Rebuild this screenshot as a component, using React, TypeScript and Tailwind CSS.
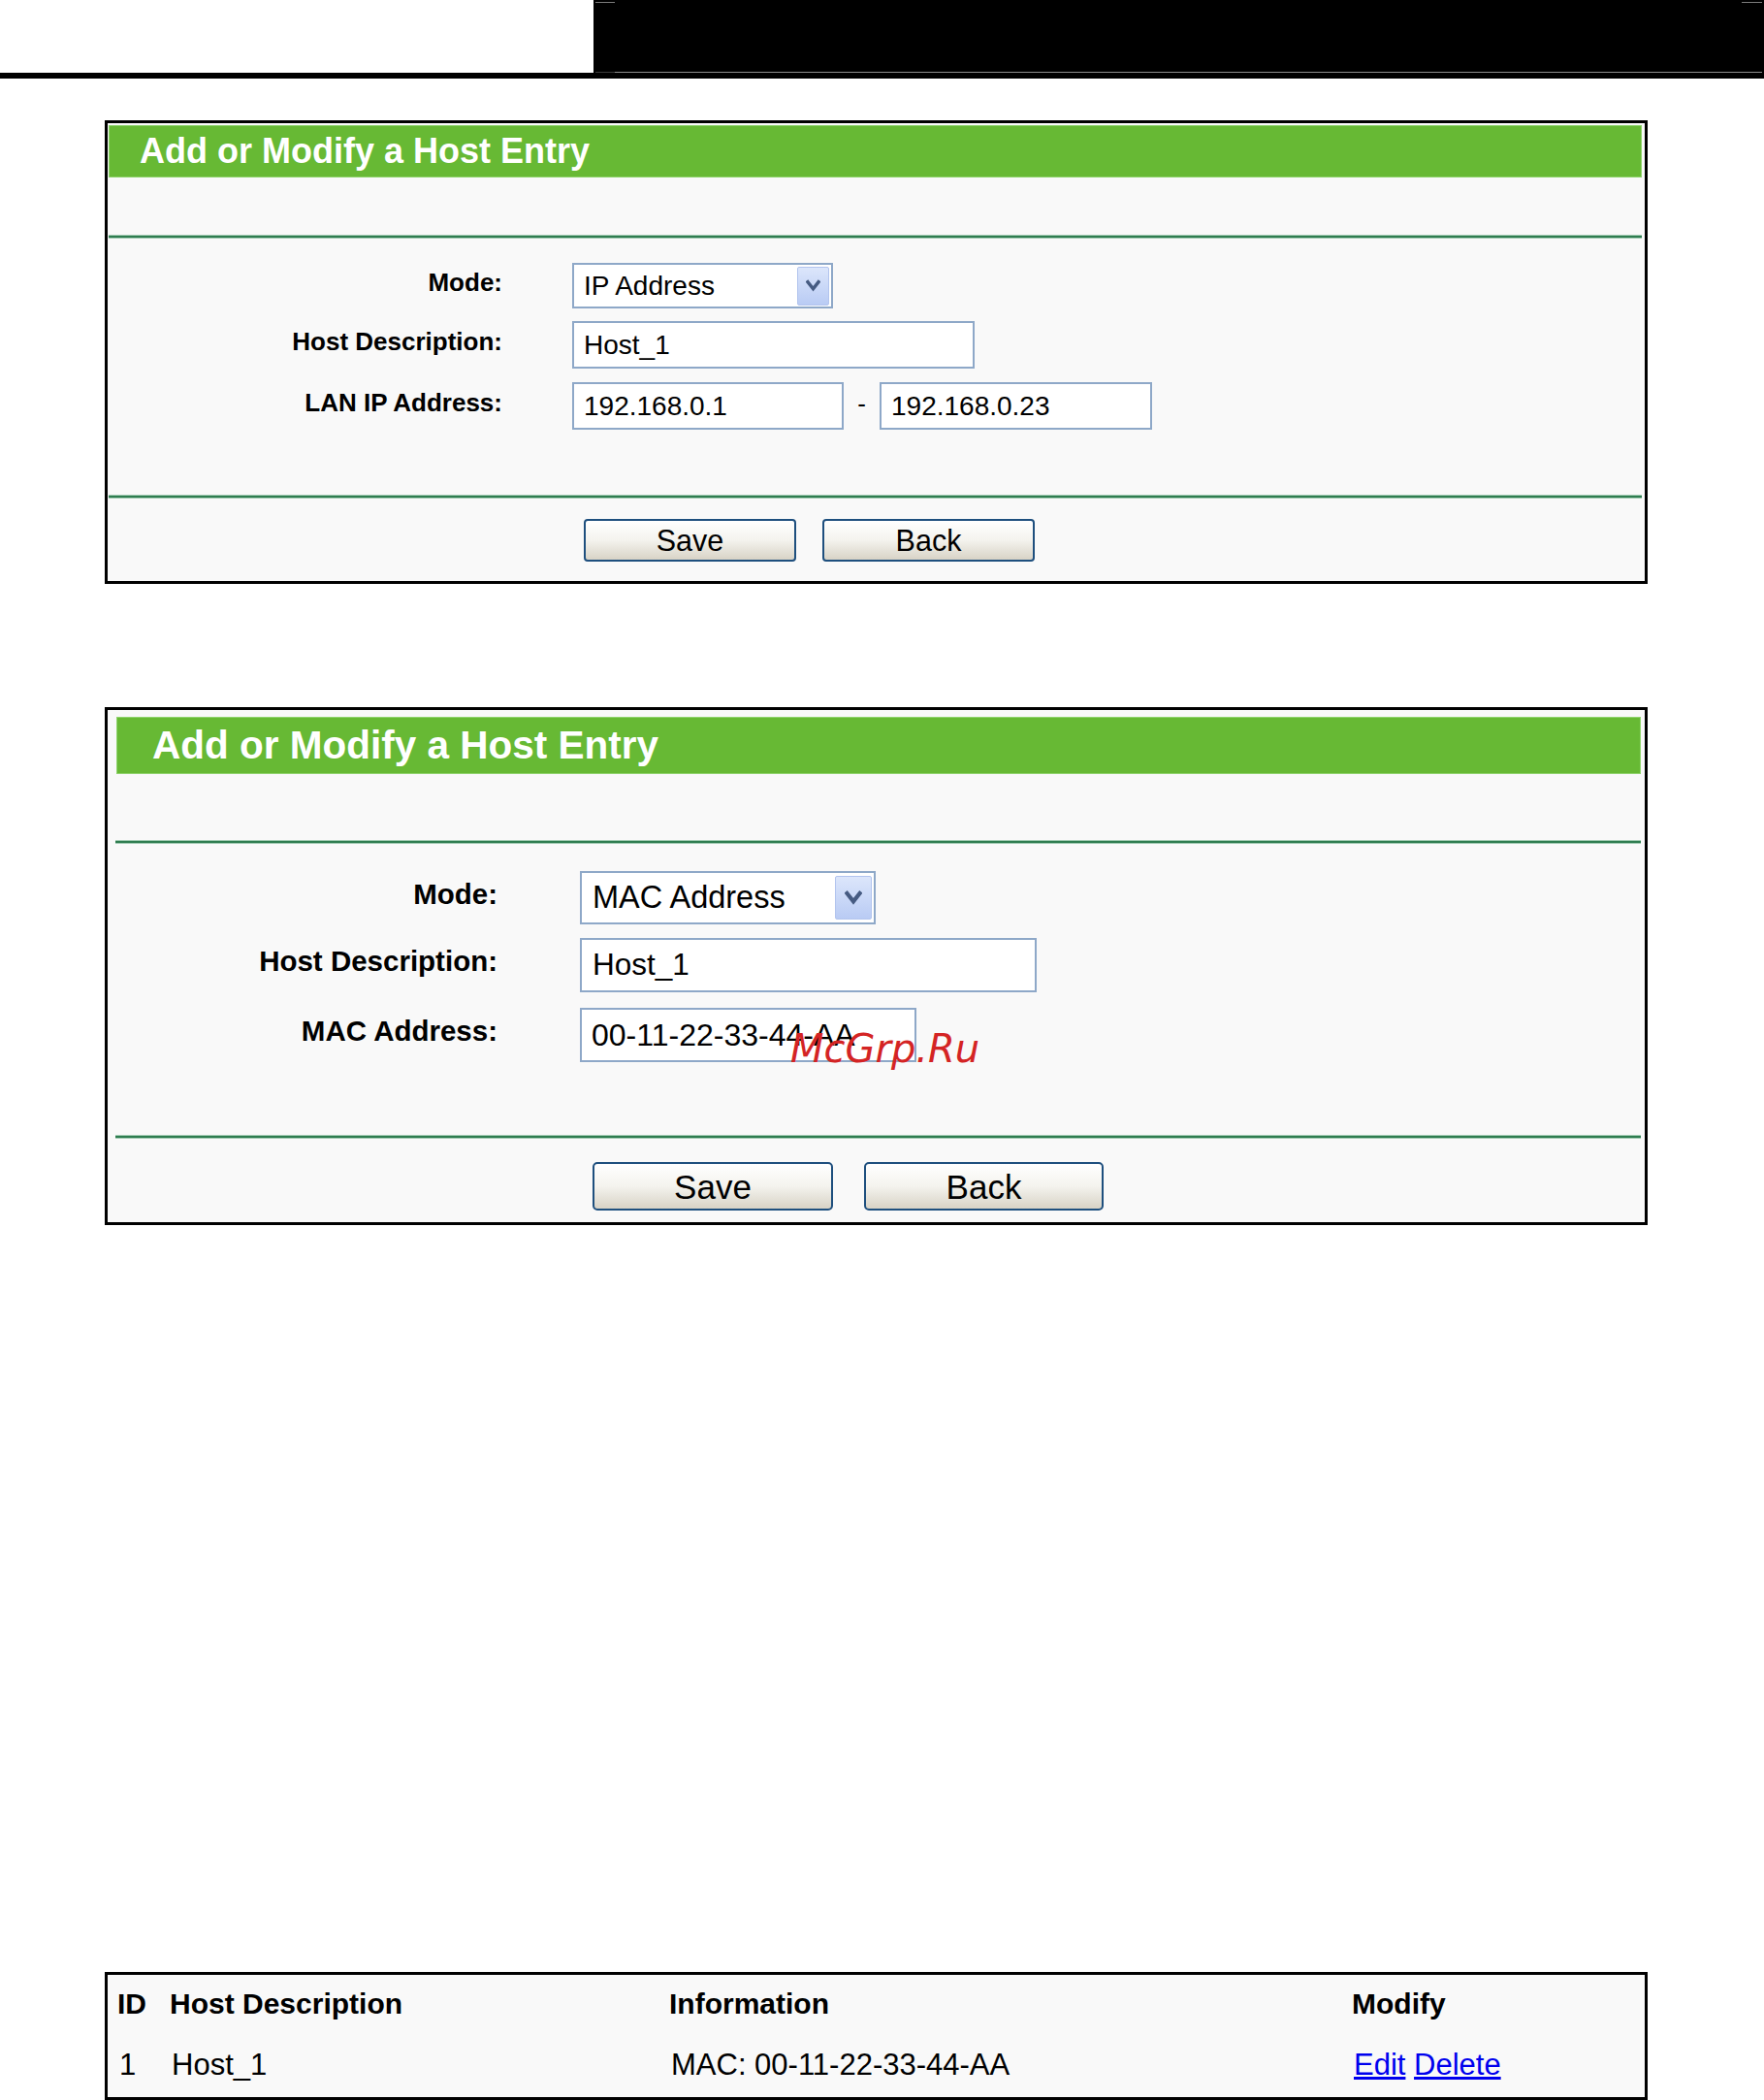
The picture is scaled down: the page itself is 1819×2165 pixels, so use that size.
import React from "react";

function Chevron({ w, h }: { w: number; h: number }) {
  return (
    <svg width={w} height={h} viewBox="0 0 12 10">
      <path d="M1.6 2 L6 7.6 L10.4 2" fill="none" stroke="#465b82" strokeWidth="2.8" strokeLinecap="square" />
    </svg>
  );
}

function Sep({ cls }: { cls: string }) {
  return <div className={"h-[4px] bg-[#2f7d50] border-y border-[#a3cbb3] " + cls} />;
}

export default function App() {
  return (
    <div className="w-[1819px] h-[2165px] bg-white overflow-hidden relative font-['Liberation_Sans',Arial,sans-serif] text-black">
      {/* top bar */}
      <div className="flex h-[75px]">
        <div className="w-[612px] bg-white" />
        <div className="flex-1 bg-black flex flex-col justify-between">
          <div className="flex justify-between px-[2px] pt-[2px]">
            <div className="w-[20px] h-[1px] bg-[#7a7a7a]" />
            <div className="w-[21px] h-[1px] bg-[#7a7a7a]" />
          </div>
          <div className="flex mx-[2px] h-[1px]">
            <div className="w-[20px] bg-[#3c3c3c]" />
            <div className="flex-1 bg-[#8c8c8c]" />
          </div>
        </div>
      </div>
      <div className="h-[6px] bg-black" />

      {/* Box 1 */}
      <div className="ml-[108px] mt-[43px] w-[1591px] h-[478px] border-[3px] border-black bg-[#f9f9f9] flex flex-col">
        <div className="ml-[1px] mr-[3px] mt-[2px] h-[54px] bg-[#67b934] border border-[#8fd36c] flex items-center pl-[31px]">
          <span className="text-white font-bold text-[36px] leading-none whitespace-nowrap">Add or Modify a Host Entry</span>
        </div>
        <Sep cls="ml-[1px] mr-[3px] mt-[59px]" />

        <div className="mt-[25px] flex items-center h-[47px]">
          <div className="w-[407px] text-right font-bold text-[26px] pb-[6px]">Mode:</div>
          <div className="ml-[72px] w-[269px] h-[47px] border-2 border-[#8ea8c8] bg-white flex items-center justify-between pl-[10px] pr-[2px]">
            <span className="text-[28px] leading-none">IP Address</span>
            <div className="w-[33px] h-[40px] rounded-[2px] border border-[#b2c4ee] bg-linear-to-b from-[#dce6fb] to-[#b9cbf4] flex items-center justify-center">
              <Chevron w={15} h={13} />
            </div>
          </div>
        </div>
        <div className="mt-[13px] flex items-center h-[49px]">
          <div className="w-[407px] text-right font-bold text-[26px] pb-[6px]">Host Description:</div>
          <div className="ml-[72px] w-[415px] h-[49px] border-2 border-[#8ea8c8] bg-white flex items-center pl-[10px]">
            <span className="text-[28px] leading-none">Host_1</span>
          </div>
        </div>
        <div className="mt-[14px] flex items-center h-[49px]">
          <div className="w-[407px] text-right font-bold text-[26px] pb-[6px]">LAN IP Address:</div>
          <div className="ml-[72px] w-[280px] h-[49px] border-2 border-[#8ea8c8] bg-white flex items-center pl-[10px]">
            <span className="text-[28px] leading-none">192.168.0.1</span>
          </div>
          <div className="w-[37px] text-center text-[26px] pb-[4px]">-</div>
          <div className="w-[281px] h-[49px] border-2 border-[#8ea8c8] bg-white flex items-center pl-[10px]">
            <span className="text-[28px] leading-none">192.168.0.23</span>
          </div>
        </div>

        <Sep cls="ml-[1px] mr-[3px] mt-[67px]" />

        <div className="mt-[21px] flex h-[44px] pl-[491px] gap-[27px]">
          <div className="w-[219px] h-[44px] rounded-[4px] border-2 border-[#1e4f7e] bg-linear-to-b from-[#ffffff] via-[#f4f3ee] to-[#d8d3c6] flex items-center justify-center text-[30.5px] leading-none">Save</div>
          <div className="w-[219px] h-[44px] rounded-[4px] border-2 border-[#1e4f7e] bg-linear-to-b from-[#ffffff] via-[#f4f3ee] to-[#d8d3c6] flex items-center justify-center text-[30.5px] leading-none">Back</div>
        </div>
      </div>

      {/* Box 2 */}
      <div className="ml-[108px] mt-[127px] w-[1591px] h-[534px] border-[3px] border-black bg-[#f9f9f9] flex flex-col">
        <div className="ml-[9px] mr-[4px] mt-[7px] h-[59px] bg-[#67b934] border border-[#8fd36c] flex items-center pl-[36px]">
          <span className="text-white font-bold text-[40.5px] leading-none whitespace-nowrap">Add or Modify a Host Entry</span>
        </div>
        <Sep cls="ml-[8px] mr-[4px] mt-[68px]" />

        <div className="mt-[28px] flex items-center h-[55px]">
          <div className="w-[402px] text-right font-bold text-[29.5px] pb-[7px]">Mode:</div>
          <div className="ml-[85px] w-[305px] h-[55px] border-2 border-[#8ea8c8] bg-white flex items-center justify-between pl-[11px] pr-[2px]">
            <span className="text-[32.5px] leading-none">MAC Address</span>
            <div className="w-[38px] h-[45px] rounded-[2px] border border-[#b2c4ee] bg-linear-to-b from-[#dce6fb] to-[#b9cbf4] flex items-center justify-center">
              <Chevron w={18} h={15} />
            </div>
          </div>
        </div>
        <div className="mt-[14px] flex items-center h-[56px]">
          <div className="w-[402px] text-right font-bold text-[29.5px] pb-[7px]">Host Description:</div>
          <div className="ml-[85px] w-[471px] h-[56px] border-2 border-[#8ea8c8] bg-white flex items-center pl-[11px]">
            <span className="text-[31.5px] leading-none">Host_1</span>
          </div>
        </div>
        <div className="mt-[16px] flex items-center h-[56px]">
          <div className="w-[402px] text-right font-bold text-[29.5px] pb-[7px]">MAC Address:</div>
          <div className="ml-[85px] w-[347px] h-[56px] border-2 border-[#8ea8c8] bg-white flex items-center pl-[10px]">
            <span className="text-[32px] leading-none whitespace-nowrap">00-11-22-33-44-AA</span>
          </div>
        </div>

        <Sep cls="ml-[8px] mr-[4px] mt-[75px]" />

        <div className="mt-[24px] flex h-[50px] pl-[500px] gap-[32px]">
          <div className="w-[248px] h-[50px] rounded-[5px] border-2 border-[#1e4f7e] bg-linear-to-b from-[#ffffff] via-[#f4f3ee] to-[#d8d3c6] flex items-center justify-center text-[35px] leading-none">Save</div>
          <div className="w-[247px] h-[50px] rounded-[5px] border-2 border-[#1e4f7e] bg-linear-to-b from-[#ffffff] via-[#f4f3ee] to-[#d8d3c6] flex items-center justify-center text-[35px] leading-none">Back</div>
        </div>
      </div>

      {/* watermark */}
      <div className="absolute left-[815px] top-[1061px] text-[40px] leading-none italic text-[#d42424] font-['DejaVu_Sans',sans-serif] whitespace-nowrap">McGrp.Ru</div>

      {/* Table */}
      <div className="ml-[108px] mt-[770px] w-[1591px] h-[132px] border-[3px] border-black bg-[#f9f9f9] flex flex-col">
        <div className="flex items-center h-[60px] font-bold text-[30px] leading-none whitespace-nowrap">
          <div className="w-[64px] pl-[10px]">ID</div>
          <div className="w-[515px]">Host Description</div>
          <div className="w-[704px]">Information</div>
          <div className="flex-1">Modify</div>
        </div>
        <div className="flex items-center h-[64px] text-[31px] leading-none whitespace-nowrap">
          <div className="w-[66px] pl-[12px]">1</div>
          <div className="w-[515px]">Host_1</div>
          <div className="w-[704px]">MAC: 00-11-22-33-44-AA</div>
          <div className="flex-1">
            <span className="text-[#0000ee] underline">Edit</span>{" "}
            <span className="text-[#0000ee] underline">Delete</span>
          </div>
        </div>
      </div>
    </div>
  );
}
